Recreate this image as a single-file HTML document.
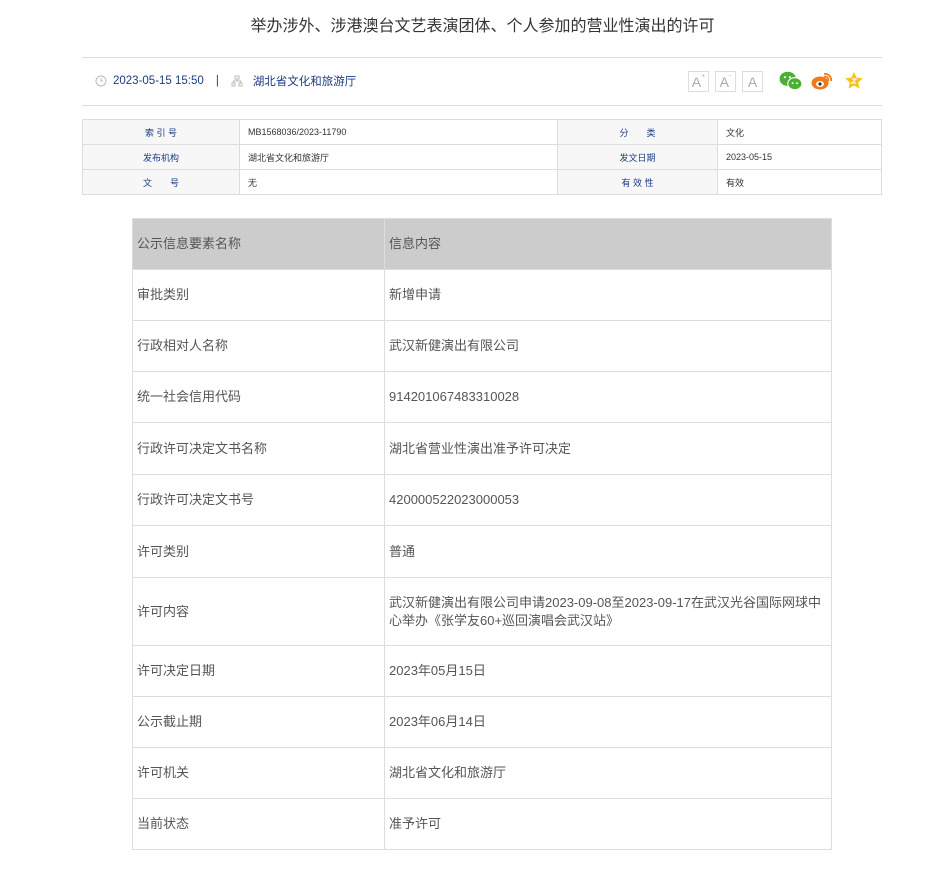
<!DOCTYPE html>
<html><head><meta charset="utf-8">
<style>
*{margin:0;padding:0;box-sizing:border-box}
body{width:945px;height:870px;background:#fff;font-family:"Liberation Sans","Noto Sans CJK SC",sans-serif;position:relative;overflow:hidden}
.title{position:absolute;top:12px;left:0;width:965px;text-align:center;font-size:16px;color:#333}
.hr{position:absolute;left:82px;width:800px;height:1px;background:#ddd}
.meta{position:absolute;top:73px;left:95px;font-size:11.5px;color:#1c3c82;display:flex;align-items:center}
.fbtn{position:absolute;top:71px;width:21px;height:21px;border:1px solid #ddd;color:#aaa;font-size:14px;text-align:center;line-height:20px}
table{border-collapse:collapse}
.t1{position:absolute;left:82px;top:119px;width:800px;font-size:9px}
.t1 td{border:1px solid #ddd;height:25px;padding:0 8px;color:#333}
.t1 td.l{background:#f7f7f7;color:#1c3c82;text-align:center}
.t2{position:absolute;left:132px;top:218px;width:700px;font-size:13px;color:#555}
.t2 td{border:1px solid #ddd;padding:0 4px;height:51px;vertical-align:middle;line-height:18px}
.t2 tr.h td{background:#ccc}
</style></head><body>
<div class="title">举办涉外、涉港澳台文艺表演团体、个人参加的营业性演出的许可</div>
<div class="hr" style="top:57px"></div>
<div class="hr" style="top:105px"></div>
<div class="meta">
<svg width="12" height="12" viewBox="0 0 12 12"><circle cx="6" cy="6" r="5" fill="none" stroke="#bbb"/><path d="M6 3v3h2" stroke="#bbb" fill="none"/></svg>
<span style="margin-left:6px">2023-05-15 15:50</span><span style="margin:0 12px">|</span>
<svg width="12" height="12" viewBox="0 0 12 12" fill="none" stroke="#bbb"><rect x="4" y="1" width="4" height="3"/><rect x="1" y="8" width="3" height="3"/><rect x="8" y="8" width="3" height="3"/><path d="M6 4v2M2.5 8V6h7v2"/></svg>
<span style="margin-left:10px">湖北省文化和旅游厅</span></div>
<div class="fbtn" style="left:688px">A<sup style="font-size:7px;vertical-align:top;line-height:10px">+</sup></div>
<div class="fbtn" style="left:715px">A<sup style="font-size:7px;vertical-align:top;line-height:10px">-</sup></div>
<div class="fbtn" style="left:742px">A</div>
<svg style="position:absolute;left:779px;top:70px" width="24" height="22" viewBox="0 0 22 20"><ellipse cx="8" cy="8" rx="7.5" ry="6.5" fill="#4caf34"/><ellipse cx="14.5" cy="12.5" rx="6.5" ry="5.5" fill="#4caf34" stroke="#fff" stroke-width="1"/><circle cx="5.5" cy="6.5" r="1" fill="#fff"/><circle cx="10" cy="6.5" r="1" fill="#fff"/><circle cx="12.5" cy="12" r=".9" fill="#fff"/><circle cx="16.5" cy="12" r=".9" fill="#fff"/></svg>
<svg style="position:absolute;left:811px;top:71px" width="22" height="20" viewBox="0 0 22 20"><ellipse cx="9" cy="12" rx="8.5" ry="6.5" fill="#f07a1a"/><ellipse cx="9" cy="13" rx="4" ry="3" fill="#fff"/><circle cx="9" cy="13" r="1.6" fill="#333"/><path d="M13 3a6 6 0 0 1 7 7M13 6a3 3 0 0 1 4 4" stroke="#f07a1a" stroke-width="1.8" fill="none"/></svg>
<svg style="position:absolute;left:844px;top:71px" width="20" height="20" viewBox="0 0 20 20"><path d="M10 1l2.6 5.6 6.2.7-4.6 4.2 1.3 6.1L10 14.5 4.5 17.6l1.3-6.1L1.2 7.3l6.2-.7z" fill="#f7c21a"/><path d="M8 8h4l-4 4h4" stroke="#fff" stroke-width="1.2" fill="none"/></svg>
<table class="t1">
<tr><td class="l" style="width:157px">索 引 号</td><td style="width:318px">MB1568036/2023-11790</td><td class="l" style="width:160px">分　　类</td><td>文化</td></tr>
<tr><td class="l">发布机构</td><td>湖北省文化和旅游厅</td><td class="l">发文日期</td><td>2023-05-15</td></tr>
<tr><td class="l">文　　号</td><td>无</td><td class="l">有 效 性</td><td>有效</td></tr>
</table>
<table class="t2">
<tr class="h"><td style="width:252px">公示信息要素名称</td><td>信息内容</td></tr>
<tr><td>审批类别</td><td>新增申请</td></tr>
<tr><td>行政相对人名称</td><td>武汉新健演出有限公司</td></tr>
<tr><td>统一社会信用代码</td><td>914201067483310028</td></tr>
<tr><td style="height:52px">行政许可决定文书名称</td><td>湖北省营业性演出准予许可决定</td></tr>
<tr><td>行政许可决定文书号</td><td>420000522023000053</td></tr>
<tr><td style="height:52px">许可类别</td><td>普通</td></tr>
<tr><td style="height:68px">许可内容</td><td>武汉新健演出有限公司申请2023-09-08至2023-09-17在武汉光谷国际网球中心举办《张学友60+巡回演唱会武汉站》</td></tr>
<tr><td>许可决定日期</td><td>2023年05月15日</td></tr>
<tr><td>公示截止期</td><td>2023年06月14日</td></tr>
<tr><td>许可机关</td><td>湖北省文化和旅游厅</td></tr>
<tr><td>当前状态</td><td>准予许可</td></tr>
</table>
</body></html>
